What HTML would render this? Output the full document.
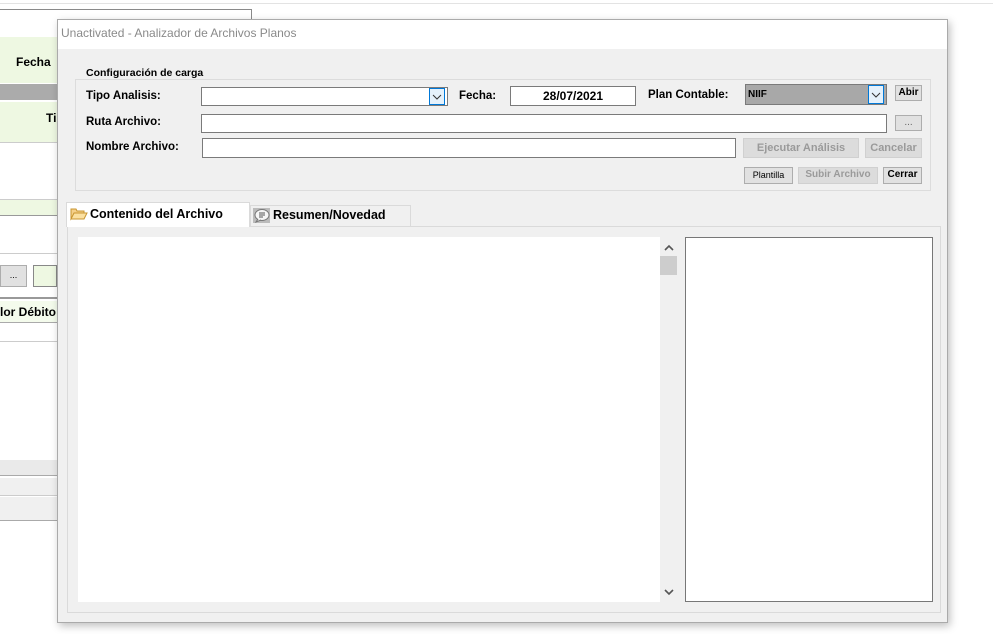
<!DOCTYPE html>
<html><head><meta charset="utf-8"><style>
*{margin:0;padding:0;box-sizing:border-box}
body{width:993px;height:634px;background:#fff;position:relative;overflow:hidden;font-family:"Liberation Sans",sans-serif;font-size:11.5px;color:#000}
.a{position:absolute}
.b{font-weight:bold}
.inp{position:absolute;background:#fff;border:1px solid #7a7a7a}
.btn{position:absolute;background:#e1e1e1;border:1px solid #adadad;text-align:center;font-weight:bold;font-size:10px;line-height:14px}
.dis{color:#9a9a9a;background:#dcdcdc;border-color:#d0d0d0}
.dd{position:absolute;width:16px;background:#e5f1fb;border:1px solid #0078d7}
</style></head><body>
<div class="a" style="left:0;top:3px;width:993px;height:1px;background:#e3e3e3"></div>
<div class="a" style="left:0;top:9px;width:252px;height:28px;border-top:1px solid #8a8a8a;border-right:1px solid #8a8a8a;background:#fff"></div>
<div class="a" style="left:0;top:37px;width:57px;height:46px;background:#eef8e2"></div>
<div class="a b" style="left:16px;top:55px;font-size:12px">Fecha</div>
<div class="a" style="left:0;top:84px;width:57px;height:16px;background:#ababab"></div>
<div class="a" style="left:0;top:102px;width:57px;height:41px;background:#eef8e2;border-bottom:1px solid #ccc"></div>
<div class="a b" style="left:46px;top:111px;font-size:12px">Ti</div>
<div class="a" style="left:0;top:199px;width:57px;height:17px;background:#eef8e2;border-top:1px solid #ccc;border-bottom:1px solid #999"></div>
<div class="a" style="left:0;top:253px;width:57px;height:1px;background:#ccc"></div>
<div class="a" style="left:0;top:265px;width:27px;height:22px;background:#e1e1e1;border:1px solid #adadad;text-align:center;font-size:9px;line-height:18px">...</div>
<div class="a" style="left:33px;top:265px;width:24px;height:22px;background:#eef8e2;border:1px solid #888"></div>
<div class="a" style="left:0;top:297px;width:57px;height:2px;background:#999"></div>
<div class="a b" style="left:0;top:301px;width:57px;height:22px;background:#f4fbec;font-size:12px;line-height:22px;overflow:hidden;white-space:nowrap;border-bottom:1px solid #aaa">lor Débito</div>
<div class="a" style="left:0;top:341px;width:57px;height:1px;background:#ccc"></div>
<div class="a" style="left:0;top:460px;width:57px;height:16px;background:#eaeaea;border-bottom:1px solid #aaa"></div>
<div class="a" style="left:0;top:478px;width:57px;height:18px;background:#f0f0f0;border-bottom:1px solid #ccc"></div>
<div class="a" style="left:0;top:497px;width:57px;height:24px;background:#f0f0f0;border-bottom:1px solid #aaa"></div>
<div class="a" style="left:57px;top:19px;width:891px;height:604px;background:#f0f0f0;border:1px solid #aaa;box-shadow:2px 3px 8px rgba(0,0,0,.25)">
 <div class="a" style="left:0;top:0;width:889px;height:29px;background:#fff;color:#8a8a8a;font-size:12px;padding:6px 0 0 3px">Unactivated - Analizador de Archivos Planos</div>
</div>
<div class="a" style="left:75px;top:79px;width:856px;height:112px;border:1px solid #dcdcdc"></div>
<div class="a b" style="left:84px;top:67px;background:#f0f0f0;padding:0 2px;font-size:10.5px">Configuración de carga</div>
<div class="a b" style="left:86px;top:90px">Tipo Analisis:</div>
<div class="inp" style="left:201px;top:87px;width:247px;height:19px"></div>
<div class="dd" style="left:429px;top:88px;height:17px"><svg width="14" height="15"><path d="M3 6l4 4 4-4" stroke="#333" fill="none"/></svg></div>
<div class="a b" style="left:459px;top:90px">Fecha:</div>
<div class="inp" style="left:510px;top:86px;width:126px;height:20px;text-align:center;font-weight:bold;line-height:18px;font-size:12px">28/07/2021</div>
<div class="a b" style="left:648px;top:89px">Plan Contable:</div>
<div class="a" style="left:745px;top:84px;width:142px;height:21px;background:#a8a8a8;border:1px solid #7a7a7a;font-weight:bold;font-size:10px;padding:4px 0 0 2px">NIIF</div>
<div class="dd" style="left:868px;top:85px;height:19px"><svg width="14" height="17"><path d="M3 7l4 4 4-4" stroke="#333" fill="none"/></svg></div>
<div class="btn" style="left:895px;top:85px;width:27px;height:16px">Abir</div>
<div class="a b" style="left:86px;top:116px">Ruta Archivo:</div>
<div class="inp" style="left:201px;top:114px;width:686px;height:19px"></div>
<div class="btn" style="left:895px;top:115px;width:27px;height:16px;font-weight:normal;color:#666">...</div>
<div class="a b" style="left:86px;top:141px">Nombre Archivo:</div>
<div class="inp" style="left:202px;top:138px;width:534px;height:20px"></div>
<div class="btn dis" style="left:743px;top:138px;width:116px;height:20px;line-height:18px;font-size:11px">Ejecutar Análisis</div>
<div class="btn dis" style="left:865px;top:138px;width:57px;height:20px;line-height:18px;font-size:11px">Cancelar</div>
<div class="btn" style="left:744px;top:167px;width:49px;height:17px;font-weight:normal;font-size:9px">Plantilla</div>
<div class="btn dis" style="left:798px;top:167px;width:80px;height:17px">Subir Archivo</div>
<div class="btn" style="left:883px;top:167px;width:39px;height:17px">Cerrar</div>
<div class="a" style="left:67px;top:226px;width:874px;height:387px;border:1px solid #dadada;background:#f0f0f0"></div>
<div class="a" style="left:250px;top:205px;width:161px;height:21px;background:#f0f0f0;border:1px solid #dadada;border-bottom:none"></div>
<div class="a" style="left:66px;top:202px;width:184px;height:25px;background:#fff;border:1px solid #dadada;border-bottom:none"></div>
<svg class="a" style="left:70px;top:207px" width="18" height="14"><path d="M1 2h5l1 2h7v3H4L1 12z" fill="#f5d08a" stroke="#c8952f"/><path d="M1 12l3-6h13l-3 6z" fill="#fbe0a0" stroke="#c8952f"/></svg>
<div class="a b" style="left:90px;top:207px;font-size:12.5px">Contenido del Archivo</div>
<svg class="a" style="left:253px;top:208px" width="18" height="16"><rect x="0" y="0" width="17" height="15" fill="#bbb"/><ellipse cx="9" cy="7" rx="7" ry="5.5" fill="#f5f5f5" stroke="#777"/><path d="M5 11l-2 3 5-2" fill="#f5f5f5" stroke="#777"/><path d="M6 5h6M6 7h6M6 9h4" stroke="#555"/></svg>
<div class="a b" style="left:273px;top:208px;font-size:12.5px">Resumen/Novedad</div>
<div class="a" style="left:78px;top:237px;width:582px;height:365px;background:#fff"></div>
<svg class="a" style="left:660px;top:240px" width="18" height="16"><path d="M5 10l4-4 4 4" stroke="#555" stroke-width="1.6" fill="none"/></svg>
<div class="a" style="left:660px;top:256px;width:17px;height:19px;background:#cdcdcd"></div>
<svg class="a" style="left:660px;top:584px" width="18" height="16"><path d="M5 6l4 4 4-4" stroke="#555" stroke-width="1.6" fill="none"/></svg>
<div class="a" style="left:685px;top:237px;width:248px;height:365px;background:#fff;border:1px solid #777"></div>
</body></html>
